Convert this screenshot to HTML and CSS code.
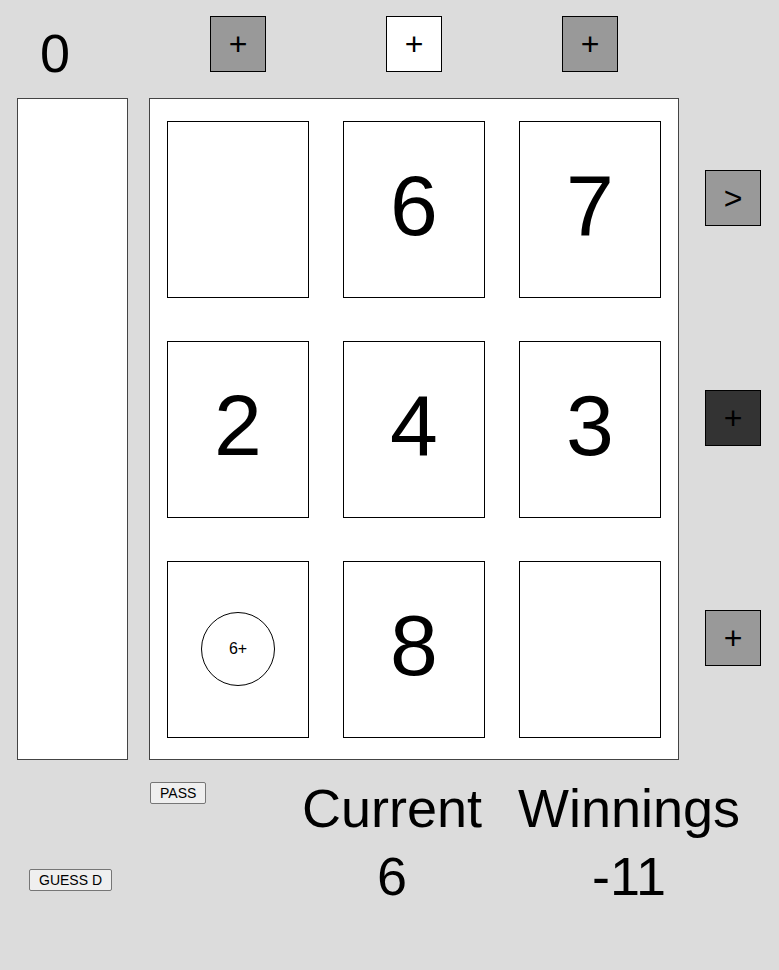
FILE: index.html
```html
<!DOCTYPE html>
<html>
<head>
<meta charset="utf-8">
<link rel="stylesheet" href="styles.css">
</head>
<body>
<div class="app">
  <div class="top">
    <div class="score">0</div>
    <div class="top-buttons">
      <button class="sq gray">+</button>
      <button class="sq white">+</button>
      <button class="sq gray">+</button>
    </div>
  </div>
  <div class="middle">
    <div class="hand"></div>
    <div class="board">
      <div class="cell"><div class="card"></div></div>
      <div class="cell"><div class="card">6</div></div>
      <div class="cell"><div class="card">7</div></div>
      <div class="cell"><div class="card">2</div></div>
      <div class="cell"><div class="card">4</div></div>
      <div class="cell"><div class="card">3</div></div>
      <div class="cell"><div class="card"><div class="chip">6+</div></div></div>
      <div class="cell"><div class="card">8</div></div>
      <div class="cell"><div class="card"></div></div>
    </div>
    <div class="side">
      <button class="sq gray">&gt;</button>
      <button class="sq dark">+</button>
      <button class="sq gray">+</button>
    </div>
  </div>
  <div class="bottom">
    <div class="guess-col"><button class="btn">GUESS D</button></div>
    <div class="pass-col"><button class="btn">PASS</button></div>
    <div class="stat current"><div>Current</div><div>6</div></div>
    <div class="stat winnings"><div>Winnings</div><div>-11</div></div>
  </div>
</div>
</body>
</html>
```

FILE: styles.css
```css
html, body {
  margin: 0;
  padding: 0;
  background: #dcdcdc;
  font-family: "Liberation Sans", Arial, sans-serif;
  color: #000;
}

.app {
  width: 779px;
  height: 970px;
}

.top {
  display: flex;
  height: 98px;
}

.score {
  width: 150px;
  box-sizing: border-box;
  padding-left: 40px;
  padding-top: 26px;
  font-size: 54px;
  line-height: 54px;
}

.top-buttons {
  display: grid;
  grid-template-columns: repeat(3, 176px);
  justify-items: center;
  align-items: start;
  padding-top: 16px;
}

.sq {
  width: 56px;
  height: 56px;
  box-sizing: border-box;
  border: 1px solid #000;
  padding: 0;
  margin: 0;
  font-family: "Liberation Sans", Arial, sans-serif;
  font-size: 32px;
  line-height: 1;
  color: #000;
  display: flex;
  align-items: center;
  justify-content: center;
  border-radius: 0;
}

.gray { background: #999; }
.white { background: #fff; }
.dark { background: #333; }

.middle {
  display: flex;
  height: 662px;
}

.hand {
  margin-left: 17px;
  width: 111px;
  height: 662px;
  box-sizing: border-box;
  border: 1px solid #444;
  background: #fff;
}

.board {
  margin-left: 21px;
  width: 530px;
  height: 662px;
  box-sizing: border-box;
  border: 1px solid #444;
  background: #fff;
  display: grid;
  grid-template-columns: repeat(3, 176px);
  grid-template-rows: repeat(3, 220px);
}

.cell {
  display: flex;
  align-items: center;
  justify-content: center;
}

.card {
  width: 142px;
  height: 177px;
  box-sizing: border-box;
  border: 1px solid #000;
  background: #fff;
  display: flex;
  align-items: center;
  justify-content: center;
  font-size: 86px;
  line-height: 1;
  padding-bottom: 8px;
}

.chip {
  width: 74px;
  height: 74px;
  box-sizing: border-box;
  border: 1px solid #000;
  border-radius: 50%;
  display: flex;
  align-items: center;
  justify-content: center;
  font-size: 16px;
  margin-top: 8px;
}

.side {
  margin-left: 26px;
  display: grid;
  grid-template-rows: repeat(3, 220px);
  align-items: start;
  padding-top: 72px;
}

.bottom {
  display: flex;
}

.guess-col {
  width: 149px;
  box-sizing: border-box;
  padding-top: 109px;
  padding-left: 29px;
}

.pass-col {
  width: 151px;
  box-sizing: border-box;
  padding-top: 22px;
  padding-left: 1px;
}

.btn {
  height: 22px;
  box-sizing: border-box;
  padding: 0 9px;
  margin: 0;
  background: #efefef;
  border: 1px solid #767676;
  border-radius: 2px;
  font-family: "Liberation Sans", Arial, sans-serif;
  font-size: 14px;
  color: #000;
}

.stat {
  padding-top: 14px;
  font-size: 54px;
  line-height: 68px;
  text-align: center;
}

.current { width: 184px; }
.winnings { width: 238px; margin-left: 26px; }
```
